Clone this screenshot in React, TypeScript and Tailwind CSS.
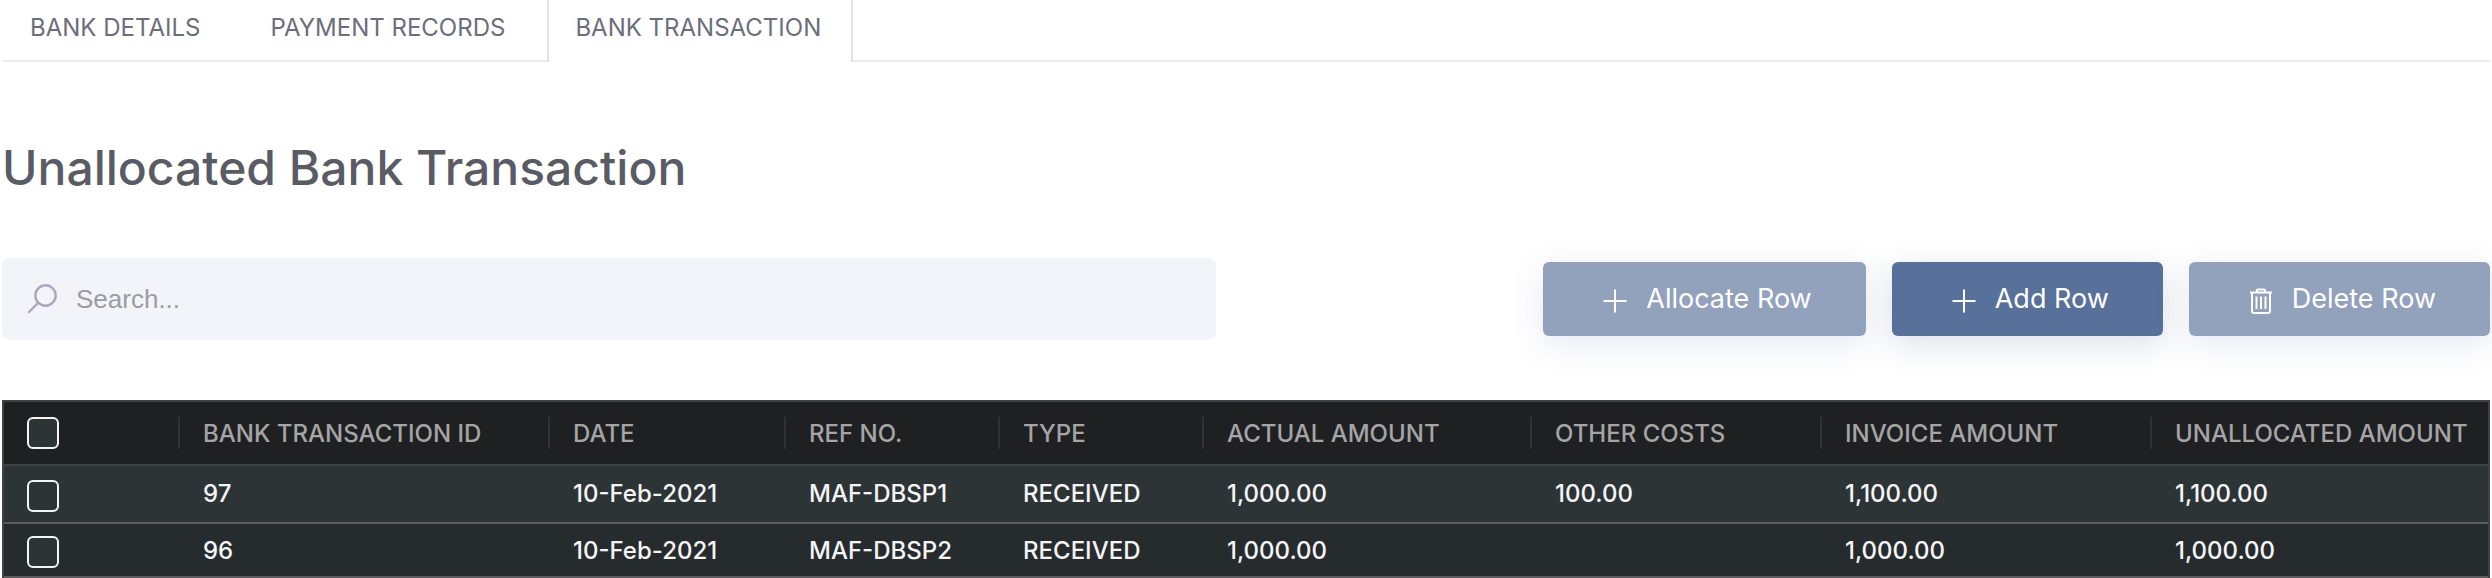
import { useState } from "react";
import type { ReactNode } from "react";

interface Column {
    key: keyof Transaction;
    label: string;
    width: string;
}

interface Transaction {
    id: string;
    date: string;
    refNo: string;
    type: string;
    actual: string;
    other: string;
    invoice: string;
    unallocated: string;
}

const TABS = ["BANK DETAILS", "PAYMENT RECORDS", "BANK TRANSACTION"];

const COLUMNS: Column[] = [
    { key: "id", label: "BANK TRANSACTION ID", width: "w-[370px]" },
    { key: "date", label: "DATE", width: "w-[236px]" },
    { key: "refNo", label: "REF NO.", width: "w-[214px]" },
    { key: "type", label: "TYPE", width: "w-[204px]" },
    { key: "actual", label: "ACTUAL AMOUNT", width: "w-[328px]" },
    { key: "other", label: "OTHER COSTS", width: "w-[290px]" },
    { key: "invoice", label: "INVOICE AMOUNT", width: "w-[330px]" },
    { key: "unallocated", label: "UNALLOCATED AMOUNT", width: "w-[336px]" },
];

const ROWS: Transaction[] = [
    {
        id: "97",
        date: "10-Feb-2021",
        refNo: "MAF-DBSP1",
        type: "RECEIVED",
        actual: "1,000.00",
        other: "100.00",
        invoice: "1,100.00",
        unallocated: "1,100.00",
    },
    {
        id: "96",
        date: "10-Feb-2021",
        refNo: "MAF-DBSP2",
        type: "RECEIVED",
        actual: "1,000.00",
        other: "",
        invoice: "1,000.00",
        unallocated: "1,000.00",
    },
];

function SearchIcon() {
    return (
        <svg className="size-8 shrink-0" viewBox="0 0 32 32" fill="none" stroke="#a9a8c3" strokeWidth="2.4" strokeLinecap="round">
            <circle cx="19.5" cy="12.5" r="10.2" />
            <path d="M12.300 19.700L3 29" />
        </svg>
    );
}

function PlusIcon() {
    return (
        <svg className="mt-1 size-6 shrink-0" viewBox="0 0 24 24" fill="none" stroke="currentColor" strokeWidth="2">
            <path d="M12 0.5v23M0.5 12h23" />
        </svg>
    );
}

function TrashIcon() {
    return (
        <svg className="mt-1 h-[26px] w-6 shrink-0" viewBox="0 0 24 26" fill="none" stroke="currentColor" strokeWidth="2">
            <path d="M1 4.500h22" />
            <path d="M8 4V2.500Q8 1.500 9 1.500h6q1 0 1 1V4" />
            <path d="M3 5v18q0 2 2 2h14q2 0 2-2V5" />
            <path d="M7.500 8.500v12.500M12 8.500v12.500M16.500 8.500v12.500" />
        </svg>
    );
}

function ActionButton({ icon, label, disabled }: { icon: ReactNode; label: string; disabled?: boolean }) {
    return (
        <button
            type="button"
            disabled={disabled}
            className="flex h-[74px] items-center rounded-md bg-[#58719b] pl-[60px] pr-[54px] text-[27px] text-white shadow-[0_8px_32px_rgba(82,95,150,0.2)] disabled:opacity-65"
        >
            {icon}
            <span className="ml-[19px] whitespace-nowrap">{label}</span>
        </button>
    );
}

function Checkbox({ label, checked, onChange }: { label: string; checked: boolean; onChange: () => void }) {
    return (
        <input
            type="checkbox"
            aria-label={label}
            checked={checked}
            onChange={onChange}
            className="block size-8 appearance-none rounded-md border-2 border-[#f3f5f5] bg-[#2d3436] checked:bg-[#58719b]"
        />
    );
}

export default function App() {
    const [activeTab, setActiveTab] = useState("BANK TRANSACTION");
    const [search, setSearch] = useState("");
    const [selected, setSelected] = useState<string[]>([]);

    const allSelected = selected.length === ROWS.length;
    const noneSelected = selected.length === 0;

    const toggleRow = (id: string) => {
        setSelected(selected.includes(id) ? selected.filter((item) => item !== id) : [...selected, id]);
    };

    return (
        <main className="bg-white px-0.5 font-['Inter',sans-serif]">
            {/* Tabs */}
            <nav className="flex h-[62px]">
                {TABS.map((tab) => (
                    <button
                        key={tab}
                        type="button"
                        onClick={() => setActiveTab(tab)}
                        className={`whitespace-nowrap text-2xl text-[#6c6e7c] ${
                            activeTab === tab
                                ? "border-x-2 border-[#e2e2e4] pb-1.5 pl-[26px] pr-[30px]"
                                : "border-b-2 border-[#ebebf2] pb-1 pl-7 pr-[42px]"
                        }`}
                    >
                        {tab}
                    </button>
                ))}
                <div className="grow border-b-2 border-[#ebebf2]" />
            </nav>

            <h1 className="mt-[72px] text-[48px] leading-[68px] font-medium text-[#595b65]">Unallocated Bank Transaction</h1>

            {/* Search and actions */}
            <div className="mt-14 grid grid-cols-2 items-center gap-[60px]">
                <label className="flex h-[82px] items-center gap-[18px] rounded-lg bg-[#f3f4f9] px-6">
                    <SearchIcon />
                    <input
                        type="text"
                        value={search}
                        onChange={(e) => setSearch(e.target.value)}
                        placeholder="Search..."
                        aria-label="Search"
                        className="min-w-0 grow bg-transparent font-['Liberation_Sans',sans-serif] text-[26px] text-[#595b65] outline-none placeholder:text-[#9b9ca4]"
                    />
                </label>
                <div className="flex justify-end gap-[26px]">
                    <ActionButton icon={<PlusIcon />} label="Allocate Row" disabled={noneSelected} />
                    <ActionButton icon={<PlusIcon />} label="Add Row" />
                    <ActionButton icon={<TrashIcon />} label="Delete Row" disabled={noneSelected} />
                </div>
            </div>

            {/* Transactions */}
            <div className="mt-[60px] overflow-x-auto border-2 border-b-0 border-[#414242]">
                <table className="w-full table-fixed border-separate border-spacing-0 text-left text-2xl">
                    <thead>
                        <tr className="h-16 bg-[#1f2022] text-[#a5a5a6]">
                            <th className="w-[176px] border-b-2 border-[#414242] p-0">
                                <div className="flex h-8 items-center border-r-2 border-[#303133] pl-[23px]">
                                    <Checkbox
                                        label="Select all rows"
                                        checked={allSelected}
                                        onChange={() => setSelected(allSelected ? [] : ROWS.map((row) => row.id))}
                                    />
                                </div>
                            </th>
                            {COLUMNS.map((column) => (
                                <th key={column.key} className={`border-b-2 border-[#414242] p-0 font-medium ${column.width}`}>
                                    <div
                                        className={`flex h-8 items-center whitespace-nowrap border-[#303133] pl-[23px] pt-0.5 ${
                                            column.key === "unallocated" ? "" : "border-r-2"
                                        }`}
                                    >
                                        {column.label}
                                    </div>
                                </th>
                            ))}
                        </tr>
                    </thead>
                    <tbody>
                        {ROWS.map((row) => (
                            <tr key={row.id} className="group h-[58px] bg-[#2d3436] text-[#f5f5f5] even:h-[54px] even:bg-[#262b2d]">
                                <td className="border-b-2 border-[#5c5c5c] p-0 pl-[23px] pt-1">
                                    <Checkbox
                                        label={`Select transaction ${row.id}`}
                                        checked={selected.includes(row.id)}
                                        onChange={() => toggleRow(row.id)}
                                    />
                                </td>
                                {COLUMNS.map((column) => (
                                    <td
                                        key={column.key}
                                        className="whitespace-nowrap border-b-2 border-[#5c5c5c] p-0 pl-[23px] font-medium group-even:pt-0.5"
                                    >
                                        {row[column.key]}
                                    </td>
                                ))}
                            </tr>
                        ))}
                    </tbody>
                </table>
            </div>
        </main>
    );
}
